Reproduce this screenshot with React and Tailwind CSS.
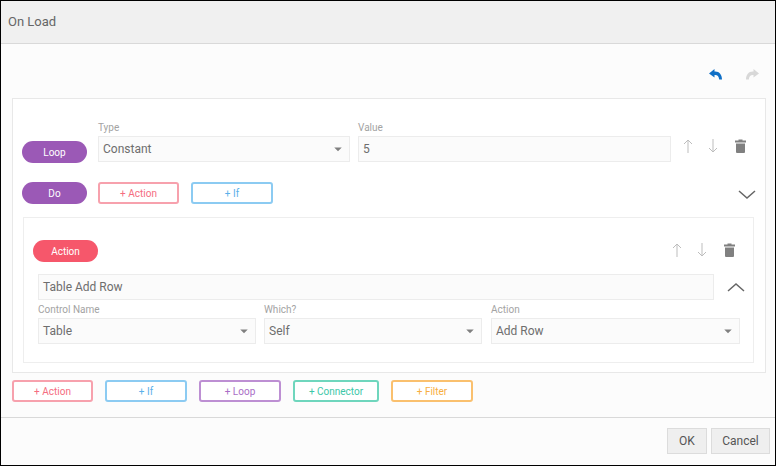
import { MdArrowDropDown } from 'react-icons/md';

const Label = ({ children }) => (
  <div className="h-[14px] text-[10px] leading-[14px] text-[#a3a3a3] mb-[1px]">{children}</div>
);

const Field = ({ children, select, className }) => (
  <div className={`h-[26px] flex items-center justify-between pl-[4px] pr-[2px] bg-[#fbfbfb] border border-[#ececec] text-[12px] text-[#6e6e6e] ${className || ''}`}>
    <span>{children}</span>
    {select && <MdArrowDropDown className="text-[18px] text-[#808080]" />}
  </div>
);

const Pill = ({ children, color }) => (
  <div className={`w-[65px] h-[22px] rounded-full flex items-center justify-center text-[10px] text-white ${color}`}>
    {children}
  </div>
);

const AddButton = ({ children, className }) => (
  <button className={`h-[22px] shrink-0 border-2 rounded-[3px] bg-white text-[10px] ${className}`}>{children}</button>
);

const Chevron = ({ up }) => (
  <svg width="18" height="10" viewBox="0 0 18 10" fill="none" stroke="#666" strokeWidth="1.5">
    <polyline points={up ? '1,9 9,2 17,9' : '1,1 9,8 17,1'} />
  </svg>
);

const Arrow = ({ down }) => (
  <svg width="10" height="14" viewBox="0 0 10 14" fill="none" stroke="#bdbdbd" strokeWidth="1">
    {down
      ? <path d="M5 0V13M1 9L5 13L9 9" />
      : <path d="M5 14V1M1 5L5 1L9 5" />}
  </svg>
);

const Trash = () => (
  <svg width="11" height="14" viewBox="0 0 11 14" fill="#808080">
    <path d="M3.5 0.5H7.5V1.5H11V3.5H0V1.5H3.5Z" />
    <path d="M1 4.5H10V13A1 1 0 0 1 9 14H2A1 1 0 0 1 1 13Z" />
  </svg>
);

const UndoIcon = ({ color, flip }) => (
  <svg width="13" height="11" viewBox="0 0 13 11" fill={color} className={flip ? '-scale-x-100' : ''}>
    <path d="M5.5 0L0 4.5L5.5 8.5V6C8 5.6 9.8 7 10.2 10.5H13C13 5.5 10 2 5.5 2.5Z" />
  </svg>
);

const RowTools = () => (
  <div className="flex items-center">
    <Arrow />
    <div className="ml-[15px] flex"><Arrow down /></div>
    <div className="ml-[17px] flex"><Trash /></div>
  </div>
);

export default function App() {
  return (
    <div className="w-[776px] h-[466px] flex flex-col border border-black bg-[#fcfcfc] font-['Roboto',sans-serif]">
      <div className="h-[43px] shrink-0 flex items-center pl-[7px] bg-[#f0f0f0] border-b border-[#d9d9d9] text-[13px] text-[#666]">
        On Load
      </div>

      <div className="flex-1 pl-[11px] pr-[9px]">
        <div className="h-[54px] flex items-start justify-end pt-[25px] pr-[7px]">
          <UndoIcon color="#0f6fc6" />
          <div className="ml-[24px] flex">
            <UndoIcon color="#d8d8d8" flip />
          </div>
        </div>

        <div className="h-[275px] bg-white border border-[#e8e8e8] pt-[22px] pl-[9px] pr-[11px]">
          <div className="flex items-end">
            <div className="w-[76px] mb-[-1px]">
              <Pill color="bg-[#9b59b6]">Loop</Pill>
            </div>
            <div className="w-[252px]">
              <Label>Type</Label>
              <Field select>Constant</Field>
            </div>
            <div className="w-[313px] ml-[8px]">
              <Label>Value</Label>
              <Field>5</Field>
            </div>
            <div className="pl-[12px] h-[26px] pt-[3px]">
              <RowTools />
            </div>
          </div>

          <div className="flex items-center mt-[20px]">
            <div className="w-[76px]">
              <Pill color="bg-[#9b59b6]">Do</Pill>
            </div>
            <AddButton className="w-[81px] border-[#f7a1ad] text-[#f56d80]">+ Action</AddButton>
            <AddButton className="w-[82px] ml-[12px] border-[#8ccbf2] text-[#5ab0ea]">+ If</AddButton>
            <div className="ml-auto mr-[-2px] mt-[4px] flex">
              <Chevron />
            </div>
          </div>

          <div className="h-[146px] mt-[13px] ml-[1px] bg-white border border-[#eeeeee] pl-[9px] pr-[8px] pt-[22px]">
            <div className="flex items-center justify-between">
              <Pill color="bg-[#f6576b]">Action</Pill>
              <div className="pr-[10px] mb-[2px]">
                <RowTools />
              </div>
            </div>

            <div className="flex items-center mt-[12px] pl-[5px]">
              <Field className="flex-1">Table Add Row</Field>
              <div className="ml-[13px] flex">
                <Chevron up />
              </div>
            </div>

            <div className="flex pl-[5px] mt-[3px]">
              <div className="w-[218px]">
                <Label>Control Name</Label>
                <Field select>Table</Field>
              </div>
              <div className="w-[218px] ml-[8px]">
                <Label>Which?</Label>
                <Field select>Self</Field>
              </div>
              <div className="w-[249px] ml-[9px]">
                <Label>Action</Label>
                <Field select>Add Row</Field>
              </div>
            </div>
          </div>
        </div>

        <div className="flex gap-[12px] mt-[7px]">
          <AddButton className="w-[81px] border-[#f7a1ad] text-[#f56d80]">+ Action</AddButton>
          <AddButton className="w-[82px] border-[#8ccbf2] text-[#5ab0ea]">+ If</AddButton>
          <AddButton className="w-[82px] border-[#bd8fd3] text-[#a96dc6]">+ Loop</AddButton>
          <AddButton className="w-[86px] border-[#6fd6bd] text-[#3cc7a8]">+ Connector</AddButton>
          <AddButton className="w-[82px] border-[#fac06e] text-[#f7ae42]">+ Filter</AddButton>
        </div>
      </div>

      <div className="h-[48px] shrink-0 flex items-start justify-end gap-[4px] pt-[10px] pr-[5px] border-t border-[#d9d9d9]">
        <button className="w-[40px] h-[26px] bg-[#efefef] border border-[#dcdcdc] text-[12px] text-[#555]">OK</button>
        <button className="w-[59px] h-[26px] bg-[#efefef] border border-[#dcdcdc] text-[12px] text-[#555]">Cancel</button>
      </div>
    </div>
  );
}
